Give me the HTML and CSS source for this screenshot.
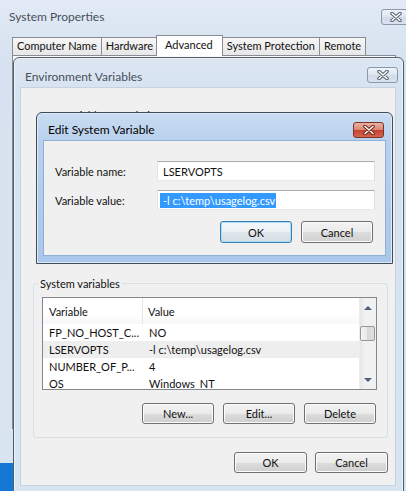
FILE: index.html
```html
<!DOCTYPE html>
<html lang="en">
<head>
  <meta charset="UTF-8">
  <title>System Properties</title>
  <link rel="stylesheet" href="styles.css">
</head>
<body>

<div class="win sysprop">
  <div class="titlebar">
    <span class="title">System Properties</span>
  </div>
  <span class="close">
    <svg width="14" height="10" viewBox="0 0 14 10"><path d="M3 1.5 L11 8.5 M11 1.5 L3 8.5" stroke="#56606c" stroke-width="3.6" stroke-linecap="round"/><path d="M3 1.5 L11 8.5 M11 1.5 L3 8.5" stroke="#fff" stroke-width="1.6" stroke-linecap="round"/></svg>
  </span>
  <div class="tabs">
    <span class="tab">Computer Name</span>
    <span class="tab">Hardware</span>
    <span class="tab active">Advanced</span>
    <span class="tab">System Protection</span>
    <span class="tab">Remote</span>
  </div>
  <div class="tabpanel"></div>
</div>

<div class="taskstrip"></div>

<div class="win envwin">
  <div class="titlebar">
    <span class="title">Environment Variables</span>
  </div>
  <span class="close">
    <svg width="14" height="10" viewBox="0 0 14 10"><path d="M3 1.5 L11 8.5 M11 1.5 L3 8.5" stroke="#56606c" stroke-width="3.6" stroke-linecap="round"/><path d="M3 1.5 L11 8.5 M11 1.5 L3 8.5" stroke="#fff" stroke-width="1.6" stroke-linecap="round"/></svg>
  </span>
  <div class="client">
    <div class="user-section">User variables for admin</div>

    <fieldset class="group">
      <legend>System variables</legend>
      <div class="listview">
        <div class="lv-main">
          <div class="lv-head"><span class="c1">Variable</span><span class="c2">Value</span></div>
          <div class="lv-row"><span class="c1">FP_NO_HOST_C...</span><span class="c2">NO</span></div>
          <div class="lv-row sel"><span class="c1">LSERVOPTS</span><span class="c2">-l c:\temp\usagelog.csv</span></div>
          <div class="lv-row"><span class="c1">NUMBER_OF_P...</span><span class="c2">4</span></div>
          <div class="lv-row"><span class="c1">OS</span><span class="c2">Windows_NT</span></div>
        </div>
        <div class="vscroll">
          <span class="sbtn"><span class="arrow up"></span></span>
          <span class="thumb"></span>
          <span class="sbtn"><span class="arrow down"></span></span>
        </div>
      </div>
      <div class="btnrow">
        <span class="btn">New...</span>
        <span class="btn">Edit...</span>
        <span class="btn">Delete</span>
      </div>
    </fieldset>

    <div class="footer">
      <span class="btn">OK</span>
      <span class="btn">Cancel</span>
    </div>
  </div>
</div>

<div class="win editwin">
  <div class="titlebar">
    <span class="title">Edit System Variable</span>
  </div>
  <span class="close red">
    <svg width="14" height="10" viewBox="0 0 14 10"><path d="M3 1.5 L11 8.5 M11 1.5 L3 8.5" stroke="#6e2418" stroke-width="3.6" stroke-linecap="round"/><path d="M3 1.5 L11 8.5 M11 1.5 L3 8.5" stroke="#fff" stroke-width="1.6" stroke-linecap="round"/></svg>
  </span>
  <div class="client">
    <div class="form">
      <span class="lbl">Variable name:</span>
      <span class="field"><span class="txt">LSERVOPTS</span></span>
      <span class="lbl">Variable value:</span>
      <span class="field"><span class="txt selected">-l c:\temp\usagelog.csv</span></span>
    </div>
    <div class="dlgbtns">
      <span class="btn default">OK</span>
      <span class="btn">Cancel</span>
    </div>
  </div>
</div>

</body>
</html>
```

FILE: styles.css
```css
* {
  box-sizing: border-box;
}
body {
  margin: 0;
  width: 406px;
  height: 491px;
  overflow: hidden;
  position: relative;
  font-family: Lato, "Noto Sans", sans-serif;
  font-size: 11px;
  color: #111;
  background: #d9e4f1;
}
.win {
  position: absolute;
}
.titlebar {
  height: 30px;
  display: flex;
  align-items: center;
}
.title {
  font-size: 12px;
  color: #47505a;
}
.close {
  position: absolute;
  display: flex;
  align-items: center;
  justify-content: center;
  width: 31px;
  height: 16px;
  border: 1px solid #8a98aa;
  border-radius: 3px;
  background: linear-gradient(#eef3f9, #dce5ef 50%, #d0dbe8 50%, #d9e2ee);
}
.close.red {
  border-color: #7d3328;
  background: linear-gradient(#eab0a3, #d98474 50%, #c5412d 50%, #d3664f);
}

/* System Properties (background window) */
.sysprop {
  left: 0;
  top: 0;
  width: 406px;
  height: 491px;
  background: linear-gradient(#e1eaf5, #d7e2f0 60px, #d9e4f1);
}
.sysprop .titlebar {
  padding: 2px 0 0 9px;
}
.sysprop .close {
  left: 381px;
  top: 9px;
  width: 30px;
}
.tabs {
  display: flex;
  align-items: flex-end;
  height: 20px;
  margin-top: 5px;
  padding-left: 12px;
}
.tab {
  position: relative;
  height: 18px;
  line-height: 16px;
  padding: 0 4px;
  margin-right: -1px;
  border: 1px solid #898c95;
  border-bottom: none;
  background: linear-gradient(#f6f6f6, #e7e7e7);
}
.tab.active {
  height: 21px;
  line-height: 17px;
  margin: 0 -1px -1px -1px;
  padding: 0 9px 0 8px;
  background: #fff;
  z-index: 1;
}
.tabpanel {
  margin-left: 12px;
  width: 384px;
  height: 374px;
  border: 1px solid #898c95;
  background: #fcfcfe;
}
.taskstrip {
  position: absolute;
  left: 0;
  bottom: 0;
  width: 13px;
  height: 28px;
  background: #1577d4;
}

/* Environment Variables window */
.envwin {
  left: 13px;
  top: 57px;
  width: 391px;
  height: 440px;
  padding: 0 8px 0 7px;
  border: 1px solid #505b68;
  border-radius: 6px 6px 0 0;
  background: linear-gradient(#dce6f3, #d6e2f0 40px, #d9e4f1);
  box-shadow: inset 0 0 0 1px #eef3f9;
}
.envwin .titlebar {
  padding: 6px 0 0 4px;
}
.envwin .close {
  right: 5px;
  top: 9px;
}
.envwin .client {
  height: 397px;
  background: #f0f0f0;
  box-shadow: 0 0 0 1px #c6d2df;
  display: flex;
  flex-direction: column;
}
.user-section {
  height: 188px;
  padding: 20px 0 0 19px;
  line-height: 15px;
}
.group {
  margin: 0 7px 0 12px;
  padding: 6px 10px 13px 8px;
  border: 1px solid #d5dfe5;
  border-radius: 3px;
  min-width: 0;
}
.group legend {
  margin-left: -4px;
  padding: 0 2px;
  line-height: 15px;
}
.listview {
  display: flex;
  height: 93px;
  border: 1px solid #828790;
  background: #fff;
  overflow: hidden;
}
.lv-main {
  flex: 1;
}
.lv-head {
  display: flex;
  height: 26px;
  align-items: center;
  background: linear-gradient(#fff, #fff 60%, #f6f7f9);
}
.lv-head .c1 {
  align-self: stretch;
  display: flex;
  align-items: center;
  border-right: 1px solid #e3e5e8;
}
.lv-row {
  display: flex;
  height: 17px;
  line-height: 17px;
  white-space: nowrap;
}
.lv-row.sel {
  background: #eeeeee;
}
.c1 {
  width: 100px;
  padding-left: 6px;
}
.c2 {
  padding-left: 5px;
}
.lv-row .c2 {
  padding-left: 6px;
}
.vscroll {
  width: 17px;
  display: flex;
  flex-direction: column;
  background: linear-gradient(90deg, #e6e6e6, #f1f1f1 30%, #f1f1f1);
  border-left: 1px solid #ececec;
}
.sbtn {
  height: 17px;
  display: flex;
  align-items: center;
  justify-content: center;
}
.sbtn:last-child {
  margin-top: auto;
}
.arrow {
  width: 0;
  height: 0;
  border-left: 4px solid transparent;
  border-right: 4px solid transparent;
}
.arrow.up {
  border-bottom: 4px solid #4d5f78;
  margin-top: 3px;
}
.arrow.down {
  border-top: 4px solid #4d5f78;
  margin-bottom: 1px;
}
.thumb {
  height: 15px;
  margin: 11px 1px 0 0;
  border: 1px solid #979797;
  border-radius: 2px;
  background: linear-gradient(90deg, #f3f3f3, #e8e8e8 50%, #d8d8d8 50%, #e0e0e0);
}
.btnrow {
  display: flex;
  justify-content: flex-end;
  gap: 9px;
  margin-top: 13px;
  padding-right: 1px;
}
.btn {
  width: 72px;
  height: 21px;
  display: flex;
  align-items: center;
  justify-content: center;
  border: 1px solid #707070;
  border-radius: 3px;
  background: linear-gradient(#f2f2f2, #ebebeb 50%, #dddddd 50%, #cfcfcf);
  box-shadow: inset 0 0 0 1px #fbfbfb;
}
.footer {
  display: flex;
  justify-content: flex-end;
  gap: 8px;
  margin-top: 14px;
  padding-right: 7px;
}
.footer .btn {
  width: 73px;
}

/* Edit System Variable dialog */
.editwin {
  left: 36px;
  top: 112px;
  width: 357px;
  height: 152px;
  padding: 0 7px 7px 7px;
  border: 1px solid #3f4b5a;
  border-radius: 6px 6px 0 0;
  background: linear-gradient(#c9dcf2, #b8d0ed 30px, #a9c7ea);
  box-shadow: inset 0 0 0 1px #e0ebf8;
}
.editwin .titlebar {
  height: 28px;
  padding: 4px 0 0 4px;
}
.editwin .title {
  color: #000;
}
.editwin .close {
  right: 8px;
  top: 9px;
}
.editwin .client {
  height: 114px;
  background: #f0f0f0;
  padding: 20px 10px 0 11px;
  box-shadow: 0 0 0 1px #8eb0d8;
}
.form {
  display: grid;
  grid-template-columns: 102px 218px;
  row-gap: 9px;
  align-items: center;
}
.field {
  height: 20px;
  padding-left: 2px;
  display: flex;
  align-items: center;
  border: 1px solid #abadb3;
  border-color: #abadb3 #dbdfe6 #e3e9ef #e2e3ea;
  background: #fff;
}
.txt {
  padding-left: 3px;
  line-height: 15px;
  white-space: nowrap;
}
.txt.selected {
  padding-right: 1px;
  background: #3399ff;
  color: #fff;
}
.dlgbtns {
  display: flex;
  justify-content: flex-end;
  gap: 9px;
  margin-top: 11px;
  padding-right: 2px;
}
.dlgbtns .btn {
  height: 22px;
}
.btn.default {
  border-color: #3c7fb1;
  box-shadow: inset 0 0 0 1px #a9dcf5;
  background: linear-gradient(#f4f8fb, #ecf1f5 50%, #dfe6ec 50%, #d6dee5);
}
```
